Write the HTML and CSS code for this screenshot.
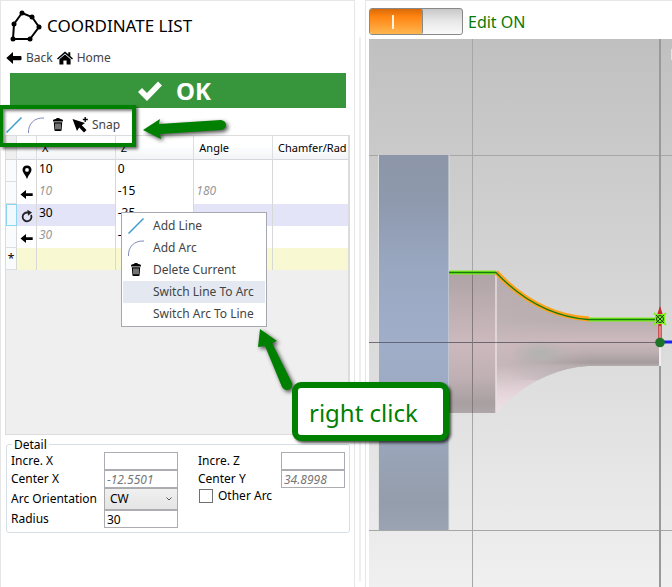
FILE: index.html
```
<!DOCTYPE html>
<html lang="en">
<head>
    <meta charset="UTF-8">
    <meta name="viewport" content="width=device-width, initial-scale=1.0">
    <title>Coordinate List</title>
    <link rel="stylesheet" href="styles.css">
</head>
<body>
    <!-- shared icons -->
    <svg class="defs" width="0" height="0" aria-hidden="true">
        <symbol id="icon-line" viewBox="0 0 16 16">
            <path d="M0.5 15.5 L15.5 0.5" stroke="#3d9dca" stroke-width="1.5" fill="none"/>
        </symbol>
        <symbol id="icon-arc" viewBox="0 0 16 16">
            <path d="M0.5 16 C0 7 6 0.5 16 1" stroke="#8089bd" stroke-width="1" fill="none"/>
        </symbol>
        <symbol id="icon-trash" viewBox="0 0 16 16">
            <path d="M3 4.5 V3.5 Q3 2.5 4.5 2.3 L5.8 2 Q6 1 8 1 Q10 1 10.2 2 L11.5 2.3 Q13 2.5 13 3.5 V4.5 Z M3.8 5.3 H12.2 L11.6 13 Q11.5 14 10.5 14 H5.5 Q4.5 14 4.4 13 Z"/>
            <path d="M6 6.5 V12.3 M8 6.5 V12.3 M10 6.5 V12.3" stroke="#fff" stroke-width="0.9"/>
        </symbol>
        <symbol id="icon-left" viewBox="0 0 16 12">
            <path d="M0.3 6 L7 0 V4 H14.5 Q15.5 4 15.5 5 V7.2 Q15.5 8.2 14.5 8.2 H7 V12 Z"/>
        </symbol>
        <symbol id="icon-small-left" viewBox="0 0 14 14">
            <path d="M0.5 7.5 L6 3 V6.3 H12.7 V9 H6 V12 Z"/>
        </symbol>
        <symbol id="icon-pin" viewBox="0 0 14 14">
            <path fill-rule="evenodd" d="M7 0.5 C10 0.5 11.5 2.5 11.5 4.8 C11.5 7.6 8.6 9.6 7.4 13.5 H6.600 C5.400 9.6 2.5 7.6 2.5 4.800 C2.5 2.5 4 0.5 7 0.5 Z M7 3 A1.9 1.9 0 1 0 7 6.800 A1.9 1.9 0 1 0 7 3 Z"/>
        </symbol>
        <symbol id="icon-rotate" viewBox="0 0 14 14">
            <path d="M8 3.600 A4.400 4.400 0 1 0 11 6" stroke="#222" stroke-width="1.800" fill="none"/>
            <path d="M7.400 0.800 L12 3.400 L8 6.800 Z" fill="#222"/>
        </symbol>
    </svg>

    <main class="app">
        <section class="panel">
            <header class="title">
                <svg class="title-icon" viewBox="0 0 32 32">
                    <path d="M3 29 L4 14 L12 3 L22 7 L29 17 L20 29 Z" fill="none" stroke="#000" stroke-width="2"/>
                    <g>
                        <circle cx="3" cy="29" r="2.5"/><circle cx="4" cy="14" r="2.5"/><circle cx="12" cy="3" r="2.5"/>
                        <circle cx="22" cy="7" r="2.5"/><circle cx="29" cy="17" r="2.5"/><circle cx="20" cy="29" r="2.5"/>
                    </g>
                </svg>
                <h1>COORDINATE LIST</h1>
            </header>

            <nav class="nav">
                <a href="#back"><svg class="icon-back"><use href="#icon-left"/></svg>Back</a>
                <a href="#home">
                    <svg class="icon-home" viewBox="0 0 16 14">
                        <path d="M8 0.5 L11.3 3.3 V1.3 H13.3 V5 L16 7.4 L15 8.4 L8 2.4 L1 8.4 L0 7.4 Z"/>
                        <path d="M8 3.6 L13.6 8.3 V13.6 H9.6 V9.4 H6.4 V13.6 H2.4 V8.3 Z"/>
                    </svg>Home
                </a>
            </nav>

            <button class="ok" type="button">
                <svg viewBox="0 0 26 22"><path d="M1 12 L5 8 L10 13 L21 1.5 L25 5.5 L10 21 Z" fill="#fff"/></svg>OK
            </button>

            <div class="toolbar">
                <button type="button" aria-label="Add Line"><svg class="icon"><use href="#icon-line"/></svg></button>
                <button type="button" aria-label="Add Arc"><svg class="icon"><use href="#icon-arc"/></svg></button>
                <button type="button" aria-label="Delete Current"><svg class="icon"><use href="#icon-trash"/></svg></button>
                <button type="button">
                    <svg class="icon" viewBox="0 0 16 16">
                        <path d="M0.5 2 L13 6 L9.8 8.2 L14.5 13 L12 15.5 L7.2 10.6 L5 14 Z"/>
                        <path d="M13.2 0 V5 M10.8 2.5 H15.8" stroke="#000" stroke-width="1.3"/>
                    </svg>Snap
                </button>
            </div>

            <div class="grid">
                <table>
                    <colgroup>
                        <col class="col-head"><col class="col-icon"><col class="col-value"><col class="col-value"><col class="col-value"><col>
                    </colgroup>
                    <thead>
                        <tr><th></th><th></th><th>X</th><th>Z</th><th>Angle</th><th>Chamfer/Rad</th></tr>
                    </thead>
                    <tbody>
                        <tr><td></td><td><svg><use href="#icon-pin"/></svg></td><td>10</td><td>0</td><td></td><td></td></tr>
                        <tr><td></td><td><svg><use href="#icon-small-left"/></svg></td><td class="auto">10</td><td>-15</td><td class="auto">180</td><td></td></tr>
                        <tr class="selected"><td></td><td><svg><use href="#icon-rotate"/></svg></td><td>30</td><td class="current">-35</td><td></td><td></td></tr>
                        <tr><td></td><td><svg><use href="#icon-small-left"/></svg></td><td class="auto">30</td><td>-50</td><td></td><td></td></tr>
                        <tr class="new"><td>*</td><td></td><td></td><td></td><td></td><td></td></tr>
                    </tbody>
                </table>
            </div>

            <fieldset class="detail">
                <legend>Detail</legend>
                <label for="incre-x">Incre. X</label>
                <input id="incre-x" type="text">
                <label class="second" for="incre-z">Incre. Z</label>
                <input id="incre-z" type="text">

                <label for="center-x">Center X</label>
                <input id="center-x" class="auto" type="text" value="-12.5501">
                <label class="second" for="center-y">Center Y</label>
                <input id="center-y" class="auto" type="text" value="34.8998">

                <label for="orientation">Arc Orientation</label>
                <div class="select">
                    <select id="orientation"><option>CW</option><option>CCW</option></select>
                    <svg viewBox="0 0 8 6"><path d="M1.5 1.5 L4 4 L6.5 1.5" fill="none" stroke="#555"/></svg>
                </div>
                <label class="second check"><input type="checkbox">Other Arc</label>

                <label for="radius">Radius</label>
                <input id="radius" type="text" value="30">
            </fieldset>
        </section>

        <section class="view">
            <div class="view-bar">
                <button class="toggle" type="button" role="switch" aria-checked="true" aria-labelledby="edit-label"><span></span></button>
                <span id="edit-label">Edit ON</span>
            </div>
            <svg class="scene" viewBox="369 39 303 548" preserveAspectRatio="xMinYMin slice">
                <defs>
                    <linearGradient id="bg" x1="0" y1="0" x2="0" y2="1">
                        <stop offset="0" stop-color="#c0c0c0"/><stop offset="1" stop-color="#f0f0f0"/>
                    </linearGradient>
                    <linearGradient id="disc" x1="0" y1="0" x2="0" y2="1">
                        <stop offset="0" stop-color="#8c96a8"/><stop offset="0.12" stop-color="#8e99ad"/>
                        <stop offset="0.3" stop-color="#99a7c1"/><stop offset="0.5" stop-color="#a0aec9"/>
                        <stop offset="0.75" stop-color="#9aa6bb"/><stop offset="0.93" stop-color="#949dab"/>
                        <stop offset="1" stop-color="#9aa4b4"/>
                    </linearGradient>
                    <linearGradient id="step" x1="0" y1="0" x2="0" y2="1">
                        <stop offset="0" stop-color="#aea3a5"/><stop offset="0.5" stop-color="#ccb9bd"/>
                        <stop offset="0.75" stop-color="#bfb0b4"/><stop offset="0.93" stop-color="#a89fa1"/>
                        <stop offset="1" stop-color="#aea6a8"/>
                    </linearGradient>
                    <linearGradient id="neck" gradientUnits="userSpaceOnUse" x1="0" y1="272" x2="0" y2="413">
                        <stop offset="0" stop-color="#b5abad"/><stop offset="0.35" stop-color="#beb1b4"/>
                        <stop offset="0.5" stop-color="#cbb9bd"/><stop offset="0.66" stop-color="#c4b6ba"/>
                        <stop offset="0.85" stop-color="#e4d4d9"/><stop offset="1" stop-color="#eee3e7"/>
                    </linearGradient>
                    <linearGradient id="rod" gradientUnits="userSpaceOnUse" x1="0" y1="319" x2="0" y2="366">
                        <stop offset="0" stop-color="#b7adaf"/><stop offset="0.45" stop-color="#ccb9bd"/>
                        <stop offset="0.7" stop-color="#bdafb2"/><stop offset="0.93" stop-color="#a59c9e"/>
                        <stop offset="1" stop-color="#b5adaf"/>
                    </linearGradient>
                    <linearGradient id="fade" x1="0" y1="0" x2="1" y2="0">
                        <stop offset="0" stop-color="#fff" stop-opacity="0"/><stop offset="1" stop-color="#fff"/>
                    </linearGradient>
                    <radialGradient id="shine">
                        <stop offset="0" stop-color="#b1b3b1"/><stop offset="1" stop-color="#b1b3b1" stop-opacity="0"/>
                    </radialGradient>
                    <mask id="rod-mask"><rect x="510" y="300" width="78" height="80" fill="url(#fade)"/><rect x="588" y="300" width="80" height="80" fill="#fff"/></mask>
                    <clipPath id="neck-shape"><path d="M496 272 C524 302 556 317 588 319 H660 V366 H588 C556 368 524 383 496 413 Z"/></clipPath>
                </defs>
                <rect x="369" y="39" width="303" height="548" fill="url(#bg)"/>
                <path d="M472.5 39 V587 M369 155.5 H672 M369 530.5 H672" stroke="#a6a6a6"/>
                <path d="M660 39 V587" stroke="#999" stroke-width="2"/>
                <path d="M671.5 49 V60" stroke="#e4e4e4"/>
                <rect x="379" y="155" width="70" height="375" fill="url(#disc)"/>
                <path d="M378.5 155 V530 M449 155 V530" stroke="#dedede"/>
                <rect x="449" y="272" width="47" height="141" fill="url(#step)"/>
                <g clip-path="url(#neck-shape)">
                    <rect x="496" y="272" width="164" height="141" fill="url(#neck)"/>
                    <rect x="496" y="300" width="164" height="80" fill="url(#rod)" mask="url(#rod-mask)"/>
                    <ellipse cx="540" cy="353" rx="28" ry="13" fill="url(#shine)"/>
                </g>
                <path d="M496 273 V413" stroke="#e9dfe1" stroke-width="1.5"/>
                <path d="M660 344 V366" stroke="#eee" stroke-width="2"/>
                <path d="M369 342.5 H660" stroke="#4c4c58" stroke-opacity="0.75"/>
                <path d="M472.5 272 V413" stroke="#857b7d"/>
                <path d="M449 272.5 H496 M588 319.5 H660" stroke="#7cf01c" stroke-width="4"/>
                <path d="M496 272 C524 302 556 317 589 319" stroke="#ffa21a" stroke-width="5" fill="none"/>
                <path d="M449 272.5 H496 C524 302 556 317 588 319.5 H660" stroke="#167a10" stroke-width="1.3" fill="none"/>
                <path d="M660 342 H672" stroke="#2020ee" stroke-width="3"/>
                <path d="M660 342 V316" stroke="#c83030" stroke-width="3.5"/>
                <path d="M660 342 V326" stroke="#f4dada" stroke-width="1"/>
                <path d="M660 306 L663 315 H657 Z" fill="#c82828"/>
                <rect x="655" y="314" width="10" height="10" fill="#7cf01c"/>
                <path d="M654 313 L666 325 M666 313 L654 325" stroke="#7cf01c" stroke-width="2"/>
                <path d="M656 315 L664 323 M664 315 L656 323 M656.5 319 A3.5 3.5 0 1 0 663.5 319 A3.5 3.5 0 1 0 656.5 319" stroke="#14380a" fill="none"/>
                <circle cx="660" cy="342.5" r="4.8" fill="#1d7426"/>
            </svg>
        </section>

        <!-- context menu of the grid -->
        <div class="menu" role="menu">
            <button type="button" role="menuitem"><svg class="icon"><use href="#icon-line"/></svg>Add Line</button>
            <button type="button" role="menuitem"><svg class="icon"><use href="#icon-arc"/></svg>Add Arc</button>
            <button type="button" role="menuitem"><svg class="icon"><use href="#icon-trash"/></svg>Delete Current</button>
            <button class="active" type="button" role="menuitem"><span class="icon"></span>Switch Line To Arc</button>
            <button type="button" role="menuitem"><span class="icon"></span>Switch Arc To Line</button>
        </div>

        <!-- help annotations -->
        <div class="highlight"></div>
        <svg class="arrow arrow-tools" viewBox="0 0 88 26">
            <path d="M1 14 L18 3 L17 8 L79 4 Q84 5 84 9 Q84 13 79 14 L18 18 L19 23 Z" fill="#008000"/>
        </svg>
        <svg class="arrow arrow-menu" viewBox="0 0 40 66">
            <path d="M3 1 L20 13 L15 15 L35 55 Q36 59 33 61 Q28 64 25 59 L8 18 L1 19 Z" fill="#008000"/>
        </svg>
        <div class="callout">right click</div>
    </main>
</body>
</html>
```
FILE: styles.css
```
* {
    box-sizing: border-box;
}
body {
    margin: 0;
    font-family: "Noto Sans", "Open Sans", sans-serif;
    font-size: 12px;
    line-height: 16px;
    color: #000;
    background: #fff;
}
button, input, select {
    font: inherit;
    color: inherit;
    margin: 0;
}
button {
    border: none;
    padding: 0;
    background: none;
    cursor: pointer;
}
.defs {
    position: absolute;
}
.icon {
    width: 16px;
    height: 16px;
    flex: none;
}
.app {
    position: relative;
    display: grid;
    grid-template-columns: 23fr 19fr;
    min-height: 100vh;
}

/* left panel */
.panel {
    display: flex;
    flex-direction: column;
    margin-right: 13px;
    padding: 8px 4px 0 4px;
    border: 1px solid #e6e6e6;
    border-bottom: none;
    min-width: 0;
}
.title {
    display: flex;
    align-items: center;
    gap: 5px;
    padding-left: 5px;
    height: 34px;
}
.title-icon {
    width: 32px;
    height: 32px;
}
h1 {
    margin: 0;
    font-size: 17px;
    font-weight: 400;
    white-space: nowrap;
}
.nav {
    display: flex;
    gap: 4px;
    height: 30px;
    padding-left: 1px;
}
.nav a {
    display: flex;
    align-items: center;
    gap: 4px;
    color: #444;
    text-decoration: none;
}
.nav svg {
    fill: #000;
}
.icon-back {
    width: 16px;
    height: 12px;
}
.icon-home {
    width: 16px;
    height: 14px;
}
.ok {
    display: flex;
    align-items: center;
    justify-content: center;
    gap: 13px;
    height: 35px;
    margin: 0 4px 0 5px;
    padding-right: 8px;
    background: #37963c;
    color: #fff;
    font-size: 24px;
    font-weight: 700;
}
.ok svg {
    width: 26px;
    height: 22px;
}
.toolbar {
    display: flex;
    align-items: center;
    gap: 6px;
    height: 27px;
    padding-top: 6px;
    padding-left: 1px;
}
.toolbar button {
    display: flex;
    align-items: center;
    gap: 4px;
    color: #444;
}

/* coordinate table */
.grid {
    height: 300px;
    background: #efefef;
    border: 1px solid #dcdcdc;
    border-right-width: 2px;
}
table {
    width: 100%;
    table-layout: fixed;
    border-collapse: separate;
    border-spacing: 0;
}
.col-head {
    width: 11px;
}
.col-icon {
    width: 20px;
}
.col-value {
    width: 23%;
}
th {
    height: 24px;
    padding: 0 0 0 5px;
    text-align: left;
    font-size: 11px;
    font-weight: 400;
    white-space: nowrap;
    border-right: 1px solid #dcdfe2;
    border-bottom: 1px solid #d4d8dc;
    background: linear-gradient(#fff 40%, #f2f4f7);
}
td {
    height: 22px;
    padding: 0 0 4px 2px;
    background: #fff;
    border-right: 1px solid #d8d8d8;
    white-space: nowrap;
}
th:first-child {
    background: #efefef;
}
td:first-child {
    padding: 0;
    text-align: center;
    background: #fafbfc;
    border-bottom: 1px solid #dcdfe2;
}
td:nth-child(2) {
    padding: 2px 0 0 3px;
    line-height: 0;
}
th:last-child, td:last-child {
    border-right: none;
}
td svg {
    width: 14px;
    height: 14px;
}
td.auto {
    color: #999;
    font-style: italic;
}
.selected td {
    background: #e4e4f8;
}
.selected td.current {
    background: #fff;
}
.selected td:first-child {
    background: #f2f9fe;
    border: 1px solid #90d4f4;
}
.new td:not(:first-child) {
    background: #f8f9d2;
}

/* detail box */
.detail {
    display: grid;
    grid-template-columns: 93px 74px 20px 83px 64px;
    grid-template-rows: 18px 18px 22px 18px;
    align-items: center;
    margin: 2px 0 0 1px;
    padding: 0 0 4px 4px;
    min-width: 0;
    border: 1px solid #d5dfe5;
    border-radius: 3px;
}
.detail legend {
    padding: 0 2px;
    margin-left: 1px;
    line-height: 15px;
}
.detail label {
    grid-column: 1;
    white-space: nowrap;
}
.detail .second {
    grid-column: 4;
}
.detail input[type="text"], .select {
    width: 100%;
    height: 100%;
    min-width: 0;
}
.detail input[type="text"] {
    padding: 0 2px;
    border: 1px solid #abadb3;
    border-radius: 0;
    background: #fff;
}
.detail input.auto {
    color: #777;
    font-style: italic;
}
.select {
    position: relative;
}
.select select {
    width: 100%;
    height: 100%;
    padding: 0 5px;
    appearance: none;
    border: 1px solid #acacac;
    border-radius: 0;
    background: linear-gradient(#f0f0f0, #e5e5e5);
}
.select svg {
    position: absolute;
    right: 5px;
    top: 8px;
    width: 8px;
    height: 6px;
    pointer-events: none;
}
.detail .check {
    display: flex;
    align-self: start;
    gap: 5px;
}
.check input {
    width: 14px;
    height: 14px;
    margin: 1px 0 0 1px;
    appearance: none;
    border: 1px solid #707070;
    background: #fff;
}

/* 3D view */
.view {
    position: relative;
    display: flex;
    flex-direction: column;
    min-width: 0;
    margin-left: -3px;
    padding-left: 3px;
    border-left: 1px solid #e6e6e6;
    border-top: 1px solid #e6e6e6;
}
/* splitter between the two panes */
.view::before {
    content: "";
    position: absolute;
    left: -7px;
    top: 36px;
    bottom: 6px;
    width: 2px;
    background: #efefef;
}
.view-bar {
    display: flex;
    align-items: center;
    gap: 5px;
    height: 38px;
    font-size: 16px;
    color: #0a7a0a;
}
.toggle {
    width: 94px;
    height: 27px;
    margin-top: 3px;
    border: 1px solid #888;
    border-radius: 3px;
    background: linear-gradient(#c8c8c8, #e8e8e8 50%, #fafafa);
}
.toggle span {
    display: flex;
    align-items: center;
    justify-content: center;
    width: 53px;
    height: 100%;
    border-right: 1px solid #888;
    border-radius: 2px;
    background: linear-gradient(#d96a08, #ff8410 30%, #ffb650);
}
.toggle span::before {
    content: "";
    width: 2px;
    height: 14px;
    margin-right: 6px;
    background: #fff3e0;
}
#edit-label {
    margin-top: 4px;
}
.scene {
    flex: 1;
    width: 100%;
    min-height: 0;
    display: block;
}

/* context menu */
.menu {
    position: absolute;
    left: 121px;
    top: 212px;
    width: 146px;
    padding: 2px 1px 1px;
    background: #fff;
    border: 1px solid #a5a8ae;
}
.menu button {
    display: flex;
    align-items: center;
    gap: 9px;
    width: 100%;
    height: 22px;
    padding-left: 5px;
    color: #444;
    white-space: nowrap;
}
.menu .active {
    background: #e3e8f1;
}

/* annotations */
.highlight {
    position: absolute;
    left: 0;
    top: 105px;
    width: 136px;
    height: 42px;
    border: 4px solid #008000;
    border-left-width: 3px;
    box-shadow: 2px 2px 3px rgba(0,0,0,0.6), inset 2px 2px 3px rgba(0,0,0,0.5);
    pointer-events: none;
}
.arrow {
    position: absolute;
    overflow: visible;
    filter: drop-shadow(2px 2px 2px rgba(0,0,0,0.7));
    pointer-events: none;
}
.arrow-tools {
    left: 142px;
    top: 116px;
    width: 88px;
    height: 26px;
}
.arrow-menu {
    left: 257px;
    top: 328px;
    width: 40px;
    height: 66px;
}
.callout {
    position: absolute;
    left: 292px;
    top: 382px;
    padding: 14px 25px 11px 11px;
    border: 6px solid #008000;
    border-radius: 9px;
    background: #fff;
    box-shadow: 2px 2px 3px rgba(0,0,0,0.7);
    color: #008000;
    font-size: 24px;
    line-height: 22px;
    white-space: nowrap;
}
```
